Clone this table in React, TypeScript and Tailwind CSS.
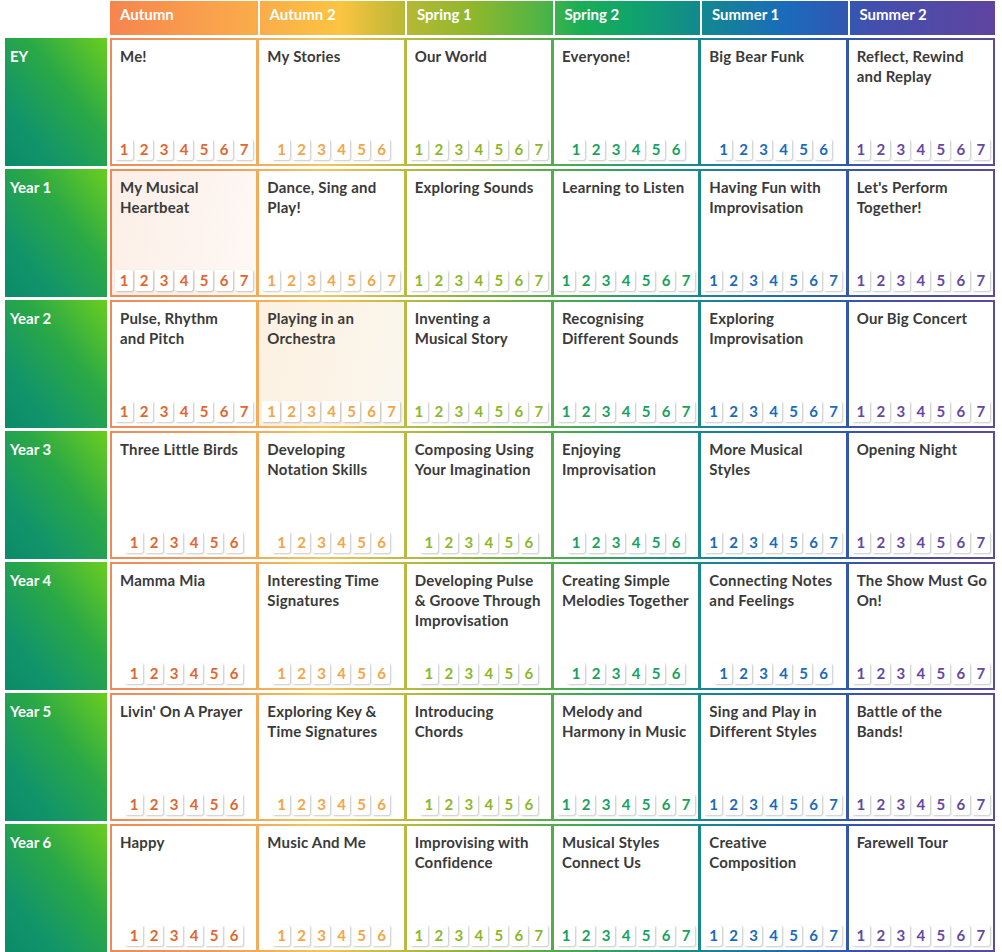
import React from 'react';

const terms = ['Autumn', 'Autumn 2', 'Spring 1', 'Spring 2', 'Summer 1', 'Summer 2'];

const numColours = ['text-[#e0672f]', 'text-[#f4a548]', 'text-[#8db72b]', 'text-[#1aa15e]', 'text-[#1b6bbd]', 'text-[#6547a5]'];

type Unit = { title: string; steps: number; tint?: string };

// titles carry their line breaks so they wrap as on the original chart
const rows: { label: string; units: Unit[] }[] = [
  {
    label: 'EY',
    units: [
      { title: 'Me!', steps: 7 },
      { title: 'My Stories', steps: 6 },
      { title: 'Our World', steps: 7 },
      { title: 'Everyone!', steps: 6 },
      { title: 'Big Bear Funk', steps: 6 },
      { title: 'Reflect, Rewind\nand Replay', steps: 7 },
    ],
  },
  {
    label: 'Year 1',
    units: [
      { title: 'My Musical\nHeartbeat', steps: 7, tint: 'bg-[linear-gradient(100deg,#fcefe7_0%,#fdf4ef_60%,#fef8f5_100%)]' },
      { title: 'Dance, Sing and\nPlay!', steps: 7 },
      { title: 'Exploring Sounds', steps: 7 },
      { title: 'Learning to Listen', steps: 7 },
      { title: 'Having Fun with\nImprovisation', steps: 7 },
      { title: "Let's Perform\nTogether!", steps: 7 },
    ],
  },
  {
    label: 'Year 2',
    units: [
      { title: 'Pulse, Rhythm\nand Pitch', steps: 7 },
      { title: 'Playing in an\nOrchestra', steps: 7, tint: 'bg-[linear-gradient(100deg,#fcf1e2_0%,#fcf4e8_60%,#f9f6ee_100%)]' },
      { title: 'Inventing a\nMusical Story', steps: 7 },
      { title: 'Recognising\nDifferent Sounds', steps: 7 },
      { title: 'Exploring\nImprovisation', steps: 7 },
      { title: 'Our Big Concert', steps: 7 },
    ],
  },
  {
    label: 'Year 3',
    units: [
      { title: 'Three Little Birds', steps: 6 },
      { title: 'Developing\nNotation Skills', steps: 6 },
      { title: 'Composing Using\nYour Imagination', steps: 6 },
      { title: 'Enjoying\nImprovisation', steps: 6 },
      { title: 'More Musical\nStyles', steps: 7 },
      { title: 'Opening Night', steps: 7 },
    ],
  },
  {
    label: 'Year 4',
    units: [
      { title: 'Mamma Mia', steps: 6 },
      { title: 'Interesting Time\nSignatures', steps: 6 },
      { title: 'Developing Pulse\n& Groove Through\nImprovisation', steps: 6 },
      { title: 'Creating Simple\nMelodies Together', steps: 6 },
      { title: 'Connecting Notes\nand Feelings', steps: 6 },
      { title: 'The Show Must Go\nOn!', steps: 7 },
    ],
  },
  {
    label: 'Year 5',
    units: [
      { title: "Livin' On A Prayer", steps: 6 },
      { title: 'Exploring Key &\nTime Signatures', steps: 6 },
      { title: 'Introducing\nChords', steps: 6 },
      { title: 'Melody and\nHarmony in Music', steps: 7 },
      { title: 'Sing and Play in\nDifferent Styles', steps: 7 },
      { title: 'Battle of the\nBands!', steps: 7 },
    ],
  },
  {
    label: 'Year 6',
    units: [
      { title: 'Happy', steps: 6 },
      { title: 'Music And Me', steps: 6 },
      { title: 'Improvising with\nConfidence', steps: 7 },
      { title: 'Musical Styles\nConnect Us', steps: 7 },
      { title: 'Creative\nComposition', steps: 7 },
      { title: 'Farewell Tour', steps: 7 },
    ],
  },
];

const StepBoxes = ({ count, colour }: { count: number; colour: string }) => (
  <div className="flex justify-center gap-[2px]">
    {Array.from({ length: count }, (_, i) => (
      <div
        key={i}
        className={`w-[18px] h-[21px] flex items-center justify-center bg-white rounded-[2px] shadow-[1px_1px_2px_rgba(0,0,0,0.22)] text-[15px] font-bold ${colour}`}
      >
        {i + 1}
      </div>
    ))}
  </div>
);

const App = () => {
  return (
    <div className="w-[1002px] h-[952px] bg-white overflow-hidden font-['Lato','Liberation_Sans',sans-serif]">
      <div className="pt-px pl-[5px] flex flex-col gap-[3px]">
        {/* term header */}
        <div className="flex gap-[3px]">
          <div className="w-[102px]" />
          <div className="w-[885px] h-[34px] grid grid-cols-6 bg-[linear-gradient(90deg,#f5854f_0%,#f99e4c_10%,#faad4a_17%,#fcc441_26%,#d6bd3a_30%,#b3b834_34%,#8fb72d_41%,#4db446_49%,#1bae56_53%,#10a36c_59%,#128b8b_66%,#1a6cba_76%,#2c5bb4_82%,#4250ad_86%,#5f44a0_100%)]">
            {terms.map((t, i) => (
              <div
                key={t}
                className={`pl-[10px] pt-[3px] text-white text-[15px] font-bold leading-[20px] ${i > 0 ? 'border-l-2 border-white' : ''}`}
              >
                {t}
              </div>
            ))}
          </div>
        </div>

        {rows.map((row) => (
          <div key={row.label} className="flex gap-[3px]">
            <div className="w-[102px] h-[128px] px-[5px] pt-[8px] text-white text-[15px] font-bold leading-[20px] bg-[linear-gradient(to_bottom_left,#6acd1f_0%,#2aa847_40%,#12946a_75%,#0a8b69_100%)]">
              {row.label}
            </div>
            <div className="w-[885px] h-[128px] p-[2px] grid grid-cols-6 gap-[3px] bg-[linear-gradient(90deg,#ee8a5a_0%,#f09c5a_12%,#f4c55a_24%,#c9bc45_31%,#8ab43a_41%,#3da855_54%,#1a9080_64%,#1d7a9e_71%,#2461b0_80%,#4050a8_86%,#5c4a9a_100%)]">
              {row.units.map((u, ci) => (
                <div
                  key={u.title}
                  className={`flex flex-col justify-between pt-[6px] pb-[4px] ${u.tint ?? 'bg-white'}`}
                >
                  <div className="pl-[8px] text-[#3a3a3a] text-[15px] font-bold leading-[20px] tracking-[0.2px] whitespace-pre-line">
                    {u.title}
                  </div>
                  <StepBoxes count={u.steps} colour={numColours[ci]} />
                </div>
              ))}
            </div>
          </div>
        ))}
      </div>
    </div>
  );
};

export default App;
